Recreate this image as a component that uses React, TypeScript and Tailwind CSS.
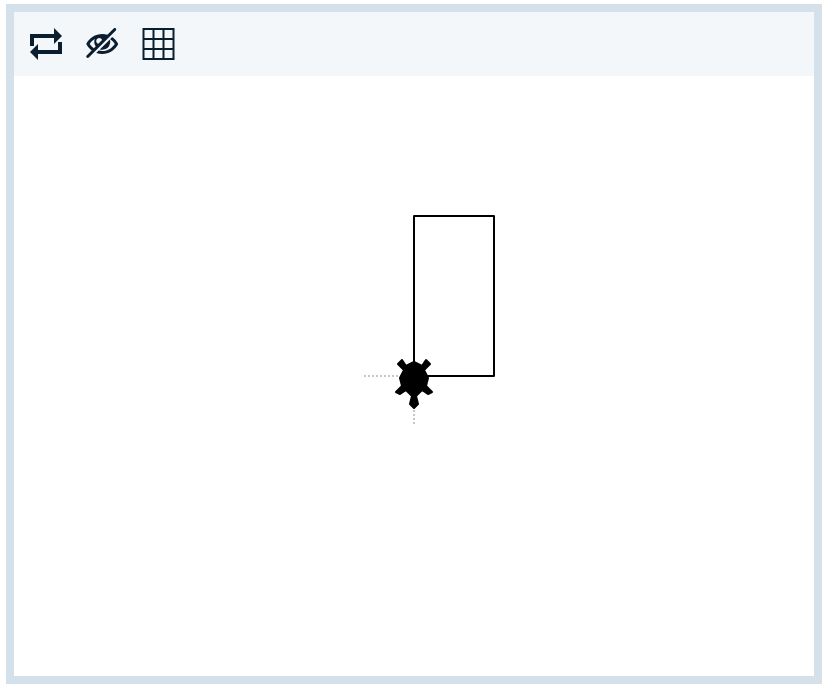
import { ImEyeBlocked } from "react-icons/im";

function RepeatIcon() {
  return (
    <svg viewBox="0 0 32 32" className="h-8 w-8" fill="currentColor">
      <path d="M0 18V6H24V0L32 8L24 16V10H4V18Z" />
      <path d="M32 14V26H8V32L0 24L8 16V22H28V14Z" />
    </svg>
  );
}

function GridIcon() {
  return (
    <svg viewBox="0.5 0 32 32" className="h-8 w-8 overflow-visible" fill="none" stroke="currentColor" strokeWidth="2">
      <path d="M1 1H31V31H1ZM11 1V31M21 1V31M1 11H31M1 21H31" />
    </svg>
  );
}

function Turtle() {
  return (
    <polygon
      transform="translate(400 300)"
      points="0,32 -4,28 -2,20 -8,14 -14,18 -18,16 -12,10 -14,2 -10,-6 -16,-12 -12,-16 -8,-10 0,-14 8,-10 12,-16 16,-12 10,-6 14,2 12,10 18,16 14,18 8,14 2,20 4,28"
      fill="black"
      stroke="black"
      strokeWidth="2"
      strokeLinejoin="round"
    />
  );
}

export default function App() {
  return (
    <main className="h-[684px] w-[824px] overflow-hidden bg-white pt-1 pl-1.5">
      <section className="flex h-[680px] w-[816px] flex-col border-8 border-[#d5e1ea]">
        <header className="flex h-16 items-center gap-[24.25px] bg-[#f3f7fa] px-4 text-[#0b1e2f]">
          <button aria-label="Repeat"><RepeatIcon /></button>
          <button aria-label="Hide turtle"><ImEyeBlocked viewBox="-0.12 0 16 16" className="h-8 w-8 overflow-visible" /></button>
          <button aria-label="Show grid"><GridIcon /></button>
        </header>
        <svg viewBox="0 0 800 600" className="h-[600px] w-[800px] bg-white">
          <path d="M350 300H450M400 250V350" fill="none" stroke="#c8c8c8" strokeWidth="2" strokeDasharray="2 2" />
          <rect x="400" y="140" width="80" height="160" fill="none" stroke="black" strokeWidth="2" strokeLinejoin="round" />
          <Turtle />
        </svg>
      </section>
    </main>
  );
}
